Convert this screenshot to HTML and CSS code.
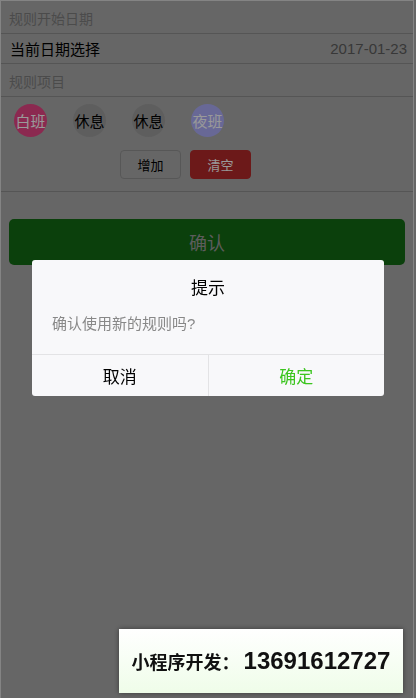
FILE: index.html
```html
<!DOCTYPE html>
<html lang="zh-CN">
<head>
<meta charset="utf-8">
<title>规则设置</title>
<link rel="stylesheet" href="styles.css">
</head>
<body>
<div class="screen">
  <div class="section-title">规则开始日期</div>
  <div class="cell">
    <span class="cell-label">当前日期选择</span>
    <span class="cell-value">2017-01-23</span>
  </div>
  <div class="section-title">规则项目</div>
  <div class="rules">
    <div class="chips">
      <span class="chip chip-day">白班</span>
      <span class="chip chip-rest">休息</span>
      <span class="chip chip-rest">休息</span>
      <span class="chip chip-night">夜班</span>
    </div>
    <div class="actions">
      <button class="btn btn-add">增加</button>
      <button class="btn btn-clear">清空</button>
    </div>
  </div>
  <div class="confirm-wrap">
    <button class="btn-confirm">确认</button>
  </div>
</div>

<div class="mask"></div>

<div class="modal">
  <div class="modal-title">提示</div>
  <div class="modal-content">确认使用新的规则吗?</div>
  <div class="modal-footer">
    <button class="modal-btn modal-cancel">取消</button>
    <button class="modal-btn modal-ok">确定</button>
  </div>
</div>

<div class="promo">
  <span class="promo-label">小程序开发：</span><span class="promo-phone">13691612727</span>
</div>
</body>
</html>
```

FILE: styles.css
```css
* {
  box-sizing: border-box;
}

html, body {
  margin: 0;
  padding: 0;
  height: 100%;
}

body {
  background: #aaaaaa;
  font-family: "Liberation Sans", "Noto Sans CJK SC", sans-serif;
  overflow: hidden;
}

.screen {
  width: 414px;
  min-height: 698px;
  border: 1px solid #dcdcdc;
  border-bottom: none;
  background: #aaaaaa;
}

.section-title {
  padding: 7px 8px 2px;
  line-height: 23px;
  font-size: 14px;
  color: #7e7e7e;
  border-bottom: 1px solid #8e8e8e;
}

.cell {
  display: flex;
  justify-content: space-between;
  align-items: center;
  height: 30px;
  padding: 0 6px 0 9px;
  border-bottom: 1px solid #8e8e8e;
  font-size: 15px;
}

.cell-label {
  color: #000;
}

.cell-value {
  color: #5e5e5e;
}

.rules {
  padding: 7px 0 12px;
  border-bottom: 1px solid #8e8e8e;
}

.chips {
  display: flex;
  gap: 26px;
  padding-left: 13px;
}

.chip {
  width: 33px;
  height: 33px;
  border-radius: 50%;
  display: flex;
  align-items: center;
  justify-content: center;
  font-size: 15px;
}

.chip-day {
  background: #e84585;
  color: #fff;
}

.chip-rest {
  background: #9d9d9d;
  color: #000;
}

.chip-night {
  background: #adaefa;
  color: #fff;
}

.actions {
  display: flex;
  gap: 9px;
  margin-top: 13px;
  padding-left: 119px;
}

.btn {
  width: 61px;
  height: 29px;
  border-radius: 4px;
  font-family: inherit;
  font-size: 13px;
  padding: 0;
}

.btn-add {
  background: #aaaaaa;
  border: 1px solid #929292;
  color: #000;
}

.btn-clear {
  background: #b42b2b;
  border: 1px solid #b42b2b;
  color: #fff;
}

.confirm-wrap {
  padding: 27px 8px 0;
}

.btn-confirm {
  display: block;
  width: 100%;
  height: 46px;
  border: none;
  border-radius: 5px;
  background: #136b14;
  color: #9a9a9a;
  font-family: inherit;
  font-size: 18px;
}

.mask {
  position: fixed;
  inset: 0;
  background: rgba(0, 0, 0, 0.4);
  z-index: 10;
}

.modal {
  position: fixed;
  left: 32px;
  top: 260px;
  width: 352px;
  background: #f8f8fa;
  border-radius: 3px;
  z-index: 20;
  overflow: hidden;
}

.modal-title {
  padding-top: 18px;
  line-height: 22px;
  text-align: center;
  font-size: 17px;
  color: #000;
}

.modal-content {
  padding: 14px 20px 20px;
  line-height: 20px;
  font-size: 15px;
  color: #888;
}

.modal-footer {
  display: flex;
  border-top: 1px solid #e3e3e5;
}

.modal-btn {
  flex: 1;
  height: 41px;
  border: none;
  background: transparent;
  font-family: inherit;
  font-size: 17px;
  padding: 0;
}

.modal-cancel {
  color: #000;
  border-right: 1px solid #e3e3e5;
}

.modal-ok {
  color: #3cc51f;
}

.promo {
  position: fixed;
  left: 119px;
  top: 629px;
  width: 284px;
  height: 64px;
  display: flex;
  align-items: center;
  justify-content: center;
  background: linear-gradient(#ffffff, #effde9);
  box-shadow: 0 0 5px rgba(0, 0, 0, 0.45);
  z-index: 30;
  color: #111;
  font-weight: bold;
}

.promo-label {
  font-family: "Noto Sans CJK SC", sans-serif;
  font-size: 18px;
}

.promo-phone {
  font-family: "Liberation Sans", sans-serif;
  font-size: 24px;
  margin-left: 4px;
}
```
